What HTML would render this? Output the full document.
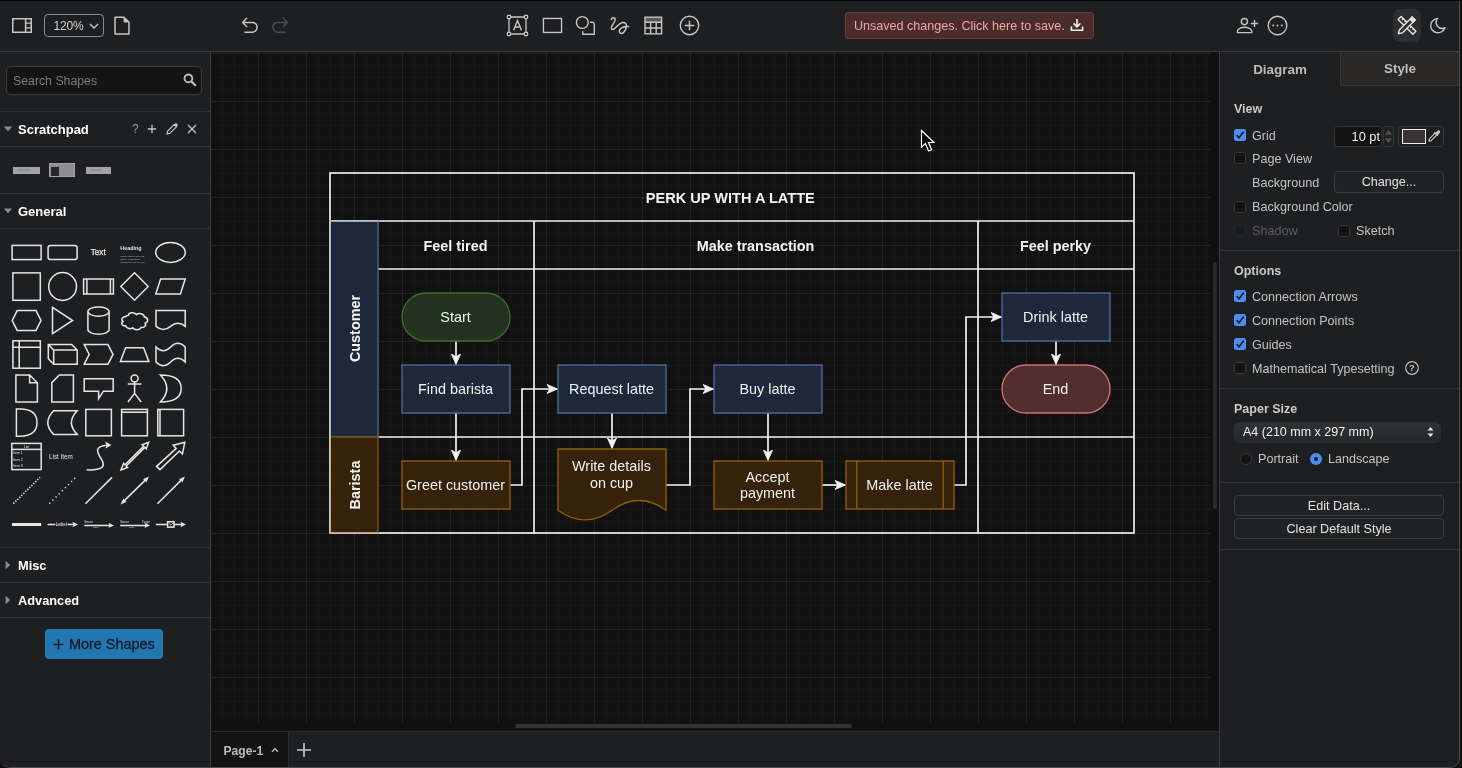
<!DOCTYPE html>
<html lang="en">
<head>
<meta charset="utf-8">
<title>draw.io</title>
<style>
*{box-sizing:border-box;margin:0;padding:0}
html,body{width:1462px;height:768px;overflow:hidden;background:#101011}
body{position:relative;font-family:"Liberation Sans",sans-serif;font-size:12px;color:#c8c8c8}
.abs{position:absolute}
#win{will-change:transform;position:absolute;left:0;top:0;width:1460px;height:768px;background:#1e1f21;border-radius:0 0 10px 10px;overflow:hidden;border-right:1px solid #505052;border-bottom:1px solid #505052}
#topline{position:absolute;left:0;top:0;width:1462px;height:1px;background:#060606;z-index:50}
#toolbar{position:absolute;left:0;top:0;width:1459px;height:52px;background:#1e1f21;border-bottom:1px solid #3a3b3d}
#left{position:absolute;left:0;top:52px;width:211px;height:716px;background:#1e1f21;border-right:1px solid #3a3b3d}
#right{position:absolute;left:1219px;top:52px;width:240px;height:716px;background:#1e1f21;border-left:1px solid #3a3b3d}
#canvas{position:absolute;left:211px;top:52px;width:1008px;height:679px;background:#111112;overflow:hidden}
#tabs{position:absolute;left:211px;top:731px;width:1008px;height:37px;background:#1e1f21;border-top:1px solid #2a2b2d}
.sep{position:absolute;left:0;width:210px;height:1px;background:#323335}
.ttl{position:absolute;left:18px;color:#fff;font-size:13px;font-weight:bold;white-space:nowrap}
.lbl{position:absolute;white-space:nowrap;color:#c4c4c4;font-size:12px}
svg{display:block;overflow:visible}
svg text{font-family:"Liberation Sans",sans-serif}
</style>
</head>
<body>
<div id="topline"></div>
<div id="win">
<div id="toolbar">
<!-- sidebar toggle -->
<svg class="abs" style="left:11px;top:16px" width="22" height="19" viewBox="0 0 22 19"><g fill="none" stroke="#c6c6c6" stroke-width="1.5"><rect x="1.75" y="2.75" width="18.5" height="13.5"/><path d="M14.6,2.75V16.25"/><path d="M14.6,7.2H20.2M14.6,11.8H20.2" stroke-width="1.2"/></g></svg>
<!-- zoom -->
<div class="abs" style="left:44px;top:14px;width:60px;height:23px;border:1px solid #8c8c8e;border-radius:4px"></div>
<div class="abs" style="left:53.500px;top:18px;font-size:12px;color:#d0d0d0;line-height:16px;letter-spacing:-0.200px">120%</div>
<svg class="abs" style="left:88px;top:21px" width="12" height="10" viewBox="0 0 12 10"><path d="M2,3L6,7L10,3" fill="none" stroke="#c6c6c6" stroke-width="1.4"/></svg>
<!-- page -->
<svg class="abs" style="left:113px;top:15px" width="18" height="21" viewBox="0 0 18 21"><path d="M2,2.2H11L16,7.2V19H2Z" fill="none" stroke="#c6c6c6" stroke-width="1.5" stroke-linejoin="round"/><path d="M10.6,2.2V7.6H16Z" fill="#c6c6c6"/></svg>
<!-- undo / redo -->
<svg class="abs" style="left:240px;top:16px" width="20" height="19" viewBox="0 0 20 19"><path d="M6.6,2.2L2.6,6.4L6.6,10.6M2.8,6.4H12.2A4.9,4.9 0 0 1 12.2,16.2H5" fill="none" stroke="#c6c6c6" stroke-width="1.5" stroke-linecap="round" stroke-linejoin="round"/></svg>
<svg class="abs" style="left:270px;top:16px" width="20" height="19" viewBox="0 0 20 19"><path d="M13.4,2.2L17.4,6.4L13.4,10.6M17.2,6.4H7.8A4.9,4.9 0 0 0 7.8,16.2H15" fill="none" stroke="#4c4d4f" stroke-width="1.5" stroke-linecap="round" stroke-linejoin="round"/></svg>
<!-- text box -->
<svg class="abs" style="left:506px;top:14px" width="23" height="23" viewBox="0 0 23 23"><g fill="none" stroke="#c6c6c6" stroke-width="1.3"><path d="M3,4.6V18.4M20,4.6V18.4M4.6,3H18.4M4.6,20H18.4"/><rect x="1.4" y="1.4" width="3.2" height="3.2" rx="0.8"/><rect x="18.4" y="1.4" width="3.2" height="3.2" rx="0.8"/><rect x="1.4" y="18.4" width="3.2" height="3.2" rx="0.8"/><rect x="18.4" y="18.4" width="3.2" height="3.2" rx="0.8"/><path d="M7.6,16.2L11.5,6.6L15.4,16.2M9,13H14" stroke-width="1.4"/></g></svg>
<!-- rectangle -->
<svg class="abs" style="left:541px;top:16px" width="23" height="19" viewBox="0 0 23 19"><rect x="2.450" y="2.450" width="18.100" height="14" fill="none" stroke="#c9c9c9" stroke-width="1.350"/></svg>
<!-- shapes -->
<svg class="abs" style="left:574px;top:15px" width="23" height="22" viewBox="0 0 23 22"><g fill="none" stroke="#c6c6c6" stroke-width="1.4"><circle cx="8.300" cy="7.500" r="5.900"/><path d="M16,7.200H18.600Q20.300,7.200 20.300,9V19.200H8.800V16.200"/></g></svg>
<!-- freehand -->
<svg class="abs" style="left:608px;top:15px" width="23" height="22" viewBox="0 0 23 22"><path d="M3.2,4.6C3.800,2.800 5.600,2.200 6.800,3.400C8.400,5 5.400,8.600 4,10.800C2.600,13 3.400,14.800 5.200,14.400C7.600,13.800 10.200,8.600 14.400,7.600C17.200,7 18.800,9 18.400,11.600C18,14.600 16,18 13.600,18.400C11.400,18.600 10.800,16.400 11.800,14.600C13.200,12.200 17,11.600 20.600,11.600" fill="none" stroke="#c6c6c6" stroke-width="1.5" stroke-linecap="round"/></svg>
<!-- table -->
<svg class="abs" style="left:643px;top:15px" width="21" height="21" viewBox="0 0 21 21"><g fill="none" stroke="#c6c6c6" stroke-width="1.4"><rect x="2" y="2.2" width="16.6" height="16.6"/><path d="M2,7.2H18.6M2,13H18.6M7.6,7.2V18.8M13.2,7.2V18.8"/></g><rect x="2" y="2.2" width="16.6" height="5" fill="#c6c6c6" opacity="0.35"/></svg>
<!-- plus circle -->
<svg class="abs" style="left:678px;top:14px" width="23" height="23" viewBox="0 0 23 23"><g fill="none" stroke="#c6c6c6" stroke-width="1.4"><circle cx="11.5" cy="11.5" r="9.2"/><path d="M11.5,6.8V16.2M6.8,11.5H16.2"/></g></svg>
<!-- unsaved -->
<div class="abs" style="left:845px;top:12px;width:249px;height:27px;background:#4a2c2c;border:1px solid #713b39;border-radius:3px"></div>
<div class="abs" style="left:854px;top:18px;font-size:12.55px;line-height:17px;color:#efa7a5;white-space:nowrap">Unsaved changes. Click here to save.</div>
<svg class="abs" style="left:1069px;top:17px" width="16" height="16" viewBox="0 0 16 16"><path d="M8,2V9.6M4.6,6.4L8,9.8L11.4,6.4M2.4,9.6V13.2H13.6V9.6" fill="none" stroke="#f2f2f2" stroke-width="1.6"/></svg>
<!-- share -->
<svg class="abs" style="left:1235px;top:15px" width="25" height="21" viewBox="0 0 25 21"><g fill="none" stroke="#c6c6c6" stroke-width="1.4"><circle cx="9.400" cy="6.600" r="3.100"/><path d="M2.400,17.600V16.400C2.400,13.600 6.600,12.300 9.600,12.300C12.600,12.300 16.800,13.600 16.800,16.400V17.600Z" stroke-linejoin="round"/><path d="M19.500,4.900V12.100M15.900,8.500H23.100"/></g></svg>
<!-- ellipsis -->
<svg class="abs" style="left:1266px;top:14px" width="23" height="23" viewBox="0 0 23 23"><circle cx="11.5" cy="11.5" r="9.3" fill="none" stroke="#c6c6c6" stroke-width="1.4"/><circle cx="7.2" cy="11.5" r="1" fill="#c6c6c6"/><circle cx="11.5" cy="11.5" r="1" fill="#c6c6c6"/><circle cx="15.8" cy="11.5" r="1" fill="#c6c6c6"/></svg>
<!-- format toggle -->
<div class="abs" style="left:1393px;top:9px;width:28px;height:33px;background:#2d2e30;border-radius:7px"></div>
<svg class="abs" style="left:1396px;top:14px" width="22" height="22" viewBox="0 0 22 22"><g fill="none" stroke="#e4e4e4" stroke-width="1.400" stroke-linejoin="round"><path d="M5.100,2.400L19.900,17.200L16.900,20.200L2.100,5.400Z"/><path d="M7.300,4.600L5.900,6M9.700,7L8.700,8M15.300,12.600L13.900,14M17.700,15L16.700,16" stroke-width="1.100"/><path d="M16.100,3.100L19.100,6.100L6.300,18.900L2.400,19.800L3.300,15.900Z" fill="#2d2e30"/></g><path d="M16.100,3.100L19.100,6.100L17,8.200L14,5.200Z" fill="#e4e4e4" stroke="#e4e4e4" stroke-width="1.400" stroke-linejoin="round"/></svg>
<!-- moon -->
<svg class="abs" style="left:1428px;top:15px" width="20" height="21" viewBox="0 0 20 21"><path d="M9.600,3.400A7.200,7.200 0 1 0 16.800,12.700A6,6 0 0 1 9.600,3.400Z" fill="none" stroke="#c6c6c6" stroke-width="1.4" stroke-linejoin="round"/></svg>
</div>
<div id="left">
<div style="position:absolute;left:0;top:-52px;width:210px;height:768px">
<!-- search -->
<div class="abs" style="left:6px;top:66px;width:196px;height:29px;background:#141415;border:1px solid #3a3b3d;border-radius:5px"></div>
<div class="abs" style="left:13px;top:73px;font-size:12.300px;line-height:17px;color:#7b7b7d;white-space:nowrap">Search Shapes</div>
<svg class="abs" style="left:182px;top:72px" width="16" height="16" viewBox="0 0 16 16"><circle cx="6.4" cy="6.4" r="3.9" fill="none" stroke="#bdbdbd" stroke-width="1.9"/><path d="M9.4,9.4L13.2,13.2" stroke="#bdbdbd" stroke-width="2.2" stroke-linecap="round"/></svg>
<div class="sep" style="top:111px"></div>
<!-- scratchpad -->
<svg class="abs" style="left:3px;top:125px" width="10" height="8" viewBox="0 0 10 8"><path d="M0.8,1.6H9.2L5,6.2Z" fill="#8d8d8f"/></svg>
<div class="ttl" style="top:121px;line-height:17px">Scratchpad</div>
<div class="abs" style="left:132px;top:121px;font-size:12px;line-height:17px;color:#9a9a9c">?</div>
<svg class="abs" style="left:146px;top:123px" width="12" height="12" viewBox="0 0 12 12"><path d="M6,1.8V10.2M1.8,6H10.2" stroke="#c6c6c6" stroke-width="1.3" fill="none"/></svg>
<svg class="abs" style="left:165px;top:122px" width="14" height="14" viewBox="0 0 14 14"><path d="M2,12L2.6,9.2L9.4,2.4L11.6,4.6L4.8,11.4Z" fill="none" stroke="#c6c6c6" stroke-width="1.2" stroke-linejoin="round"/><path d="M9.4,2.4L10.4,1.4Q11,0.8 11.6,1.4L12.6,2.4Q13.2,3 12.6,3.6L11.6,4.6Z" fill="#c6c6c6"/></svg>
<svg class="abs" style="left:186px;top:123px" width="12" height="12" viewBox="0 0 12 12"><path d="M2,2L10,10M10,2L2,10" stroke="#c6c6c6" stroke-width="1.3" fill="none"/></svg>
<div class="sep" style="top:146px"></div>
<div class="abs" style="left:13px;top:167px;width:27px;height:7px;background:#a3a3a5"></div>
<div class="abs" style="left:17px;top:169px;width:14px;height:2px;background:#8b909a"></div>
<div class="abs" style="left:49px;top:163px;width:26px;height:14px;background:#8e8e90;border:1px solid #a3a3a5"></div>
<div class="abs" style="left:51px;top:167px;width:8px;height:9px;background:#26272a"></div>
<div class="abs" style="left:86px;top:167px;width:25px;height:7px;background:#a3a3a5"></div>
<div class="abs" style="left:91px;top:169px;width:10px;height:2px;background:#8b909a"></div>
<div class="sep" style="top:193px"></div>
<!-- general -->
<svg class="abs" style="left:3px;top:207px" width="10" height="8" viewBox="0 0 10 8"><path d="M0.8,1.6H9.2L5,6.2Z" fill="#8d8d8f"/></svg>
<div class="ttl" style="top:203px;line-height:17px">General</div>
<div class="sep" style="top:228px"></div>
<svg class="abs" style="left:0;top:232px" width="210" height="314" viewBox="0 232 210 314">
<g fill="none" stroke="#e6e6e6" stroke-width="1.5" stroke-linejoin="miter">
<!-- row 1 -->
<rect x="12.1" y="245.4" width="29" height="14.2"/>
<rect x="48.1" y="245.4" width="29" height="14.2" rx="2.4"/>
<ellipse cx="170.5" cy="252.4" rx="14.8" ry="10"/>
<!-- row 2 -->
<rect x="12.9" y="272.9" width="27.4" height="27.4"/>
<circle cx="62.6" cy="286.5" r="13.9"/>
<rect x="83.6" y="279" width="29.8" height="15"/>
<path d="M86.9,279V294M110.4,279V294"/>
<path d="M134.5,272.8L148.2,286.5L134.5,300.2L120.8,286.5Z"/>
<path d="M160.6,279H185.2L180.4,294H155.8Z"/>
<!-- row 3 -->
<path d="M17.2,310.6H36L41,320.5L36,330.4H17.2L12.2,320.5Z"/>
<path d="M52.5,307.4L72.6,320.5L52.5,333.6Z"/>
<path d="M87.9,311.6V329.6A10.6,4.6 0 0 0 109.1,329.6V311.6A10.6,4.6 0 0 0 87.9,311.6A10.6,4.6 0 0 0 109.1,311.6"/>
<path d="M126,316.4C122.4,316.4 120.6,319.8 123,321.4C120.4,323 122.6,326.6 125.6,325.8C126.6,328.8 131,329.4 132.6,327.8C134.6,330.6 139.6,330.4 141.2,327.4C144.6,328 146.6,325.2 145.2,323.2C148.8,322 148.2,317.4 144.4,317C144,313.6 138.4,312.6 136.4,314.6C134,311.8 128.8,312.4 128.4,315.2C127.4,315.2 126.4,315.6 126,316.4Z"/>
<path d="M156,310.6H185.2V326.4Q177.9,320.2 170.6,326.4Q163.3,332.6 156,326.4Z"/>
<!-- row 4 -->
<rect x="12.9" y="340.8" width="27.4" height="27.4"/>
<path d="M19.2,340.8V368.2M12.9,347.2H40.3"/>
<path d="M48.3,344.6H71.8L77.2,350V364.2H53.7L48.3,358.8ZM48.3,344.6L53.7,350H77.2M53.7,350V364.2"/>
<path d="M84.2,344.6H108L113,354.4L108,364.2H84.2L89.2,354.4Z"/>
<path d="M120.4,361.6L125.6,347.8H143.6L148.8,361.6Z"/>
<path d="M156,347Q163.3,354.4 170.6,347Q177.9,339.6 185.2,347V362Q177.9,354.6 170.6,362Q163.3,369.4 156,362Z"/>
<!-- row 5 -->
<path d="M15.9,375H29.6L37.4,382.8V402H15.9ZM29.6,375V382.8H37.4"/>
<path d="M59.4,375H73.4V402H51.8V382.6Z"/>
<path d="M84.2,378.8H113.2V391.2H103.4L98.6,398.6V391.2H84.2Z"/>
<circle cx="134.6" cy="378.6" r="3.5"/>
<path d="M134.6,382.1V393.4M127.8,384H141.4M134.6,393.4L128,402M134.6,393.4L141.2,402"/>
<path d="M160.4,375Q181.2,375 181.2,388.5Q181.2,402 160.4,402Q173.2,388.5 160.4,375Z"/>
<!-- row 6 -->
<path d="M16.4,409H20Q37,409 37,422.6Q37,436.2 20,436.2H16.4Z"/>
<path d="M53.6,410.8H77.2Q65.6,422.6 77.2,434.4H53.6Q42,422.6 53.6,410.8Z"/>
<rect x="85.8" y="409.4" width="25.6" height="26.4"/>
<rect x="121.6" y="409.4" width="25.8" height="26.4"/>
<path d="M121.6,412.2H147.4"/>
<rect x="157.8" y="409.4" width="25.8" height="26.4"/>
<path d="M160,409.4V435.8"/>
<!-- row 7 -->
<rect x="11.8" y="443.4" width="29.4" height="26.2"/>
<path d="M11.8,449.4H41.2"/>
<path d="M86.6,469.8C102,470.6 106,466.6 101.6,459.6C96.6,451.6 94,446.4 107.4,445.3"/>
<path d="M121,470L123.600,463.4L125,464.8L143.600,446.2L142.200,444.800L148.600,442.4L146.200,448.800L144.800,447.400L126.200,466L127.600,467.400Z"/>
<path d="M156.600,466.400L176.200,448.400L173.200,445.200L184.800,442.200L182.400,454L179.400,451L160,469.600Z"/>
<!-- row 8 -->
<path d="M13.4,503.600L40,477.400" stroke-dasharray="1.4 1.4"/>
<path d="M49.400,503.600L75.600,477.400" stroke-dasharray="1.2 3.2"/>
<path d="M85.400,503.800L112,477.400"/>
<path d="M123.600,501.400L146,479.400"/>
<path d="M157.400,503.800L182,479.400"/>
<!-- row 9 -->
<path d="M12,524.500H41.200" stroke-width="3"/>
<path d="M47.600,524.500H74"/>
<path d="M84.200,525.400H110"/>
<path d="M120.200,525.400H146"/>
<path d="M155.800,524.500H182"/>
<rect x="167.600" y="521.700" width="6.400" height="5.400" fill="#1e1f21"/>
<path d="M168.400,522.800L170.800,525L173.200,522.800" stroke-width="0.8"/>
</g>
<g fill="#e6e6e6" stroke="none">
<path d="M111.6,445L105,441.6L106.6,445.2L105.4,448.6Z"/>
<path d="M120.600,504.400L126.800,501.800L124.600,500.800L123.400,498.200Z"/>
<path d="M149,476.600L142.800,479.200L145,480.200L146.200,482.800Z"/>
<path d="M185,476.600L178.800,479.200L181,480.200L182.200,482.800Z"/>
<path d="M78,524.500L72.400,521.800L73.600,524.500L72.400,527.200Z"/>
<path d="M114,525.400L108.400,522.700L109.600,525.400L108.400,528.100Z"/>
<path d="M150,525.400L144.400,522.700L145.600,525.400L144.400,528.100Z"/>
<path d="M186,524.500L180.400,521.800L181.600,524.500L180.400,527.200Z"/>
</g>
<g fill="#e2e2e2" stroke="none" font-family="'Liberation Sans',sans-serif">
<text x="98.200" y="255.100" font-size="8.200" text-anchor="middle" stroke="#e6e6e6" stroke-width="0.250">Text</text>
<text x="120.300" y="250.400" font-size="5.400" font-weight="bold">Heading</text>
<text x="120.300" y="256.600" font-size="2.500" fill="#b8b8b8">Lorem ipsum dolor sit</text>
<text x="120.300" y="259.600" font-size="2.500" fill="#b8b8b8">amet, consectetur</text>
<text x="120.300" y="262.600" font-size="2.500" fill="#b8b8b8">adipisicing elit, sed do</text>
<text x="26.500" y="447.900" font-size="3.400" text-anchor="middle">List</text>
<text x="13.200" y="454.300" font-size="3.400">Item 1</text>
<text x="13.200" y="460.500" font-size="3.400">Item 2</text>
<text x="13.200" y="466.700" font-size="3.400">Item 3</text>
<text x="49" y="458.800" font-size="6.3">List Item</text>
<text x="61.300" y="526.200" font-size="4.600" text-anchor="middle" stroke="#1e1f21" stroke-width="1.6" paint-order="stroke">Label</text>
<text x="84.200" y="523.400" font-size="2.800">Source</text>
<text x="120.200" y="523.400" font-size="2.800">Source</text>
<text x="142" y="523.400" font-size="2.800">Target</text>
<text x="93" y="527.600" font-size="2.200" stroke="#1e1f21" stroke-width="0.6" paint-order="stroke">Label</text>
<text x="129" y="527.600" font-size="2.200" stroke="#1e1f21" stroke-width="0.6" paint-order="stroke">Label</text>
</g>
</svg>
<div class="sep" style="top:547px"></div>
<svg class="abs" style="left:4px;top:560px" width="8" height="10" viewBox="0 0 8 10"><path d="M1.6,0.8V9.2L6.2,5Z" fill="#8d8d8f"/></svg>
<div class="ttl" style="top:557px;line-height:17px;font-size:12.8px">Misc</div>
<div class="sep" style="top:582px"></div>
<svg class="abs" style="left:4px;top:595px" width="8" height="10" viewBox="0 0 8 10"><path d="M1.6,0.8V9.2L6.2,5Z" fill="#8d8d8f"/></svg>
<div class="ttl" style="top:592px;line-height:17px;font-size:12.8px">Advanced</div>
<div class="sep" style="top:617px"></div>
<div class="abs" style="left:45px;top:629px;width:118px;height:30px;background:#2277b1;border-radius:4px"></div>
<svg class="abs" style="left:52px;top:638px" width="13" height="13" viewBox="0 0 13 13"><path d="M6.5,1.6V11.4M1.6,6.5H11.4" stroke="#0f1a24" stroke-width="1.7" fill="none"/></svg>
<div class="abs" style="left:69px;top:635px;font-size:14.4px;line-height:19px;color:#0f1a24;white-space:nowrap;-webkit-text-stroke:0.300px #0f1a24" id="more">More Shapes</div>
</div>
</div>
<div id="canvas">
<svg width="1008" height="679" viewBox="211 52 1008 679">
<defs>
<pattern id="grid" x="246" y="89" width="48" height="48" patternUnits="userSpaceOnUse">
<g shape-rendering="crispEdges">
<rect x="0" y="0" width="1" height="48" fill="#171719"/>
<rect x="24" y="0" width="1" height="48" fill="#171719"/>
<rect x="36" y="0" width="1" height="48" fill="#171719"/>
<rect x="0" y="0" width="48" height="1" fill="#171719"/>
<rect x="0" y="24" width="48" height="1" fill="#171719"/>
<rect x="0" y="36" width="48" height="1" fill="#171719"/>
<rect x="12" y="0" width="1" height="48" fill="#242426"/>
<rect x="0" y="12" width="48" height="1" fill="#242426"/>
</g>
</pattern>
<marker id="ah" viewBox="0 0 12 10" refX="11" refY="5" markerWidth="12" markerHeight="10" markerUnits="userSpaceOnUse" orient="auto">
<path d="M0.6,0.4 L11,5 L0.6,9.6 L3.2,5 Z" fill="#f2f2f2" stroke="#f2f2f2" stroke-width="0.8" stroke-linejoin="miter"/>
</marker>
</defs>
<rect x="211" y="52" width="999" height="670" fill="url(#grid)"/>
<!-- scrollbars -->
<rect x="1213" y="262" width="4" height="247" rx="2" fill="#29292b"/>
<rect x="515" y="724" width="337" height="4" rx="2" fill="#333335"/>
<!-- pool -->
<g transform="translate(-0.5,-0.5)">
<g fill="none" stroke="#f0f0f0" stroke-width="1.7">
<rect x="330.5" y="173.5" width="804" height="360"/>
<path d="M330.5,221.5H1134.5M378.5,269.5H1134.5M378.5,437.5H1134.5M534.5,221.5V533.5M978.5,221.5V533.5"/>
</g>
<rect x="330.5" y="221.5" width="48" height="216" fill="#1d293b" stroke="#4f698f" stroke-width="1.3"/>
<rect x="330.5" y="437.5" width="48" height="96" fill="#36210a" stroke="#80560a" stroke-width="1.3"/>
<g fill="none" stroke="#f0f0f0" stroke-width="1.7" opacity="0.72">
<path d="M330.5,221.5V533.5M330.5,221.5H378.5M330.5,533.5H378.5"/>
</g>
</g>
<!-- header text -->
<g fill="#f4f4f4" font-weight="bold" font-size="14.4" text-anchor="middle">
<text x="730.3" y="203" font-size="14.55">PERK UP WITH A LATTE</text>
<text x="455.5" y="251">Feel tired</text>
<text x="755.5" y="251">Make transaction</text>
<text x="1055.5" y="251">Feel perky</text>
<text transform="translate(359.5,328.5) rotate(-90)">Customer</text>
<text transform="translate(359.5,485) rotate(-90)">Barista</text>
</g>
<g transform="translate(-0.5,-0.5)">
<!-- edges -->
<g fill="none" stroke="#f2f2f2" stroke-width="1.7" marker-end="url(#ah)">
<path d="M456.5,341.5V365"/>
<path d="M456.5,413.5V461"/>
<path d="M510.5,485.5H522.5V389.5H558"/>
<path d="M612.5,413.5V449"/>
<path d="M666.5,485.5H690.5V389.5H714"/>
<path d="M768.5,413.5V461"/>
<path d="M822.5,485.5H846"/>
<path d="M954.5,485.5H966.5V317.5H1002"/>
<path d="M1056.5,341.5V365"/>
</g>
<!-- shapes -->
<g stroke-width="1.35">
<rect x="402.5" y="293.5" width="108" height="48" rx="24" fill="#21321f" stroke="#41692b"/>
<rect x="402.5" y="365.5" width="108" height="48" fill="#1d293b" stroke="#506b93"/>
<rect x="402.5" y="461.5" width="108" height="48" fill="#36210a" stroke="#8f5f02"/>
<rect x="558.5" y="365.5" width="108" height="48" fill="#1d293b" stroke="#506b93"/>
<path d="M558.5,449.5H666.5V510.7Q639.5,491.3 612.5,510.7Q585.5,530.1 558.5,510.7Z" fill="#36210a" stroke="#8f5f02"/>
<rect x="714.5" y="365.5" width="108" height="48" fill="#1d293b" stroke="#506b93"/>
<rect x="714.5" y="461.5" width="108" height="48" fill="#36210a" stroke="#8f5f02"/>
<rect x="846.5" y="461.5" width="108" height="48" fill="#36210a" stroke="#8f5f02"/>
<path d="M857.3,461.5V509.5M943.7,461.5V509.5" fill="none" stroke="#8f5f02"/>
<rect x="1002.5" y="293.5" width="108" height="48" fill="#1d293b" stroke="#506b93"/>
<rect x="1002.5" y="365.5" width="108" height="48" rx="24" fill="#512d2b" stroke="#c47572"/>
</g>
</g>
<g fill="#f2f2f2" font-size="14.4" text-anchor="middle">
<text x="455.5" y="321.5">Start</text>
<text x="455.5" y="393.5">Find barista</text>
<text x="455.5" y="489.5">Greet customer</text>
<text x="611.5" y="393.5">Request latte</text>
<text x="611.5" y="470.8">Write details</text>
<text x="611.5" y="488.2">on cup</text>
<text x="767.5" y="393.5">Buy latte</text>
<text x="767.5" y="481.800">Accept</text>
<text x="767.5" y="498.200">payment</text>
<text x="899.5" y="489.5">Make latte</text>
<text x="1055.5" y="321.5">Drink latte</text>
<text x="1055.5" y="393.5">End</text>
</g>
<!-- cursor -->
<g transform="translate(921,130)">
<path d="M0.5,0.5V17.2L4.4,13.6L7.6,21L10.6,19.7L7.5,12.5H12.9Z" fill="#050505" stroke="#fff" stroke-width="1.2" stroke-linejoin="miter"/>
</g>
</svg>
</div>
<div id="tabs">
<div class="abs" style="left:0;top:0;width:78px;height:36px;background:#131314;border-right:1px solid #2c2d2f"></div>
<div class="abs" style="left:12.500px;top:11px;font-size:12.100px;font-weight:bold;line-height:16px;color:#bdbdbd;white-space:nowrap">Page-1</div>
<svg class="abs" style="left:59px;top:14px" width="10" height="8" viewBox="0 0 10 8"><path d="M2,5.8L5,2.8L8,5.800" fill="none" stroke="#bdbdbd" stroke-width="1.400"/></svg>
<svg class="abs" style="left:85px;top:10px" width="16" height="16" viewBox="0 0 16 16"><path d="M8,1V15M1,8H15" fill="none" stroke="#c4c4c4" stroke-width="1.700"/></svg>
</div>
<div id="right">
<div style="position:absolute;left:-1220px;top:-52px;width:1459px;height:768px">
<style>
.cb{position:absolute;width:12px;height:12px;border-radius:2.500px;background:#131314;border:1px solid #37383a}
.cbon{position:absolute;width:12px;height:12px;border-radius:2.500px;background:#4b8ef0}
.rl{position:absolute;white-space:nowrap;color:#c2c2c2;font-size:12.600px;line-height:16px}
.rh{position:absolute;left:1234px;white-space:nowrap;color:#c9c9c9;font-size:12.500px;font-weight:bold;line-height:16px}
.btn{position:absolute;border:1px solid #3a3b3d;border-radius:4px;background:#212224;color:#e2e2e2;font-size:12.600px;line-height:20.500px;text-align:center;white-space:nowrap}
.rsep{position:absolute;left:1220px;width:239px;height:1px;background:#323335}
</style>
<!-- tabs -->
<div class="abs" style="left:1340px;top:52px;width:119px;height:34px;background:#292826;border-left:1px solid #363636;border-bottom:1px solid #363636"></div>
<div class="abs" style="left:1220px;top:61px;width:120px;text-align:center;font-size:13.400px;font-weight:bold;line-height:18px;color:#bcbcbc">Diagram</div>
<div class="abs" style="left:1341px;top:60px;width:118px;text-align:center;font-size:13.400px;font-weight:bold;line-height:18px;color:#bcbcbc">Style</div>
<!-- view -->
<div class="rh" style="top:100.500px">View</div>
<div class="cbon" style="left:1234px;top:129px"></div>
<svg class="abs" style="left:1234px;top:129px" width="12" height="12" viewBox="0 0 12 12"><path d="M2.600,6.200L5,8.800L9.600,2.800" fill="none" stroke="#101826" stroke-width="1.700"/></svg>
<div class="rl" style="left:1252px;top:127.500px">Grid</div>
<div class="abs" style="left:1334px;top:126px;width:48px;height:21px;background:#121213;border:1px solid #37383a;border-radius:4px"></div>
<div class="abs" style="left:1334px;top:128.500px;width:46px;text-align:right;font-size:12.800px;line-height:16px;color:#f0f0f0;white-space:nowrap">10 pt</div>
<div class="abs" style="left:1383px;top:126px;width:11px;height:21px;border:1px solid #37383a;border-radius:3px"></div>
<svg class="abs" style="left:1383px;top:126px" width="11" height="21" viewBox="0 0 11 21"><path d="M2.600,8.200L5.500,4.600L8.400,8.200Z M2.600,12.800L5.500,16.400L8.400,12.800Z" fill="#4a4b4d" stroke="#6a6b6d" stroke-width="0.600"/></svg>
<div class="abs" style="left:1398px;top:126px;width:46px;height:21px;border:1px solid #37383a;border-radius:4px"></div>
<div class="abs" style="left:1401.500px;top:128.500px;width:24px;height:15px;background:#3a3434;border:1.500px solid #ededed"></div>
<svg class="abs" style="left:1427px;top:129px" width="14" height="14" viewBox="0 0 14 14"><path d="M1.800,12.200L2.400,9.800L8,4.200L9.800,6L4.200,11.600Z" fill="none" stroke="#c6c6c6" stroke-width="1.100" stroke-linejoin="round"/><path d="M7.400,3.400L10.600,6.600M9,4L10.600,2.400Q11.600,1.400 12.400,2.200Q13,3 12,4L10.400,5.600Z" fill="#c6c6c6" stroke="#c6c6c6" stroke-width="1.100" stroke-linecap="round"/></svg>
<div class="cb" style="left:1234px;top:152px"></div>
<div class="rl" style="left:1252px;top:150.500px">Page View</div>
<div class="rl" style="left:1252px;top:174.500px">Background</div>
<div class="btn" style="left:1334px;top:171px;width:110px;height:22px">Change...</div>
<div class="cb" style="left:1234px;top:201px"></div>
<div class="rl" style="left:1252px;top:199px">Background Color</div>
<div class="cb" style="left:1234px;top:225px;background:#1c1d1f;border-color:#28292b"></div>
<div class="rl" style="left:1252px;top:222.500px;color:#5d5d5f">Shadow</div>
<div class="cb" style="left:1338px;top:225px"></div>
<div class="rl" style="left:1356px;top:222.500px">Sketch</div>
<div class="rsep" style="top:250px"></div>
<!-- options -->
<div class="rh" style="top:263px">Options</div>
<div class="cbon" style="left:1234px;top:290px"></div>
<svg class="abs" style="left:1234px;top:290px" width="12" height="12" viewBox="0 0 12 12"><path d="M2.600,6.200L5,8.800L9.600,2.800" fill="none" stroke="#101826" stroke-width="1.700"/></svg>
<div class="rl" style="left:1252px;top:288.500px">Connection Arrows</div>
<div class="cbon" style="left:1234px;top:314px"></div>
<svg class="abs" style="left:1234px;top:314px" width="12" height="12" viewBox="0 0 12 12"><path d="M2.600,6.200L5,8.800L9.600,2.800" fill="none" stroke="#101826" stroke-width="1.700"/></svg>
<div class="rl" style="left:1252px;top:312.500px">Connection Points</div>
<div class="cbon" style="left:1234px;top:338px"></div>
<svg class="abs" style="left:1234px;top:338px" width="12" height="12" viewBox="0 0 12 12"><path d="M2.600,6.200L5,8.800L9.600,2.800" fill="none" stroke="#101826" stroke-width="1.700"/></svg>
<div class="rl" style="left:1252px;top:336.500px">Guides</div>
<div class="cb" style="left:1234px;top:362px"></div>
<div class="rl" style="left:1252px;top:360.500px">Mathematical Typesetting</div>
<svg class="abs" style="left:1404px;top:360px" width="16" height="16" viewBox="0 0 16 16"><circle cx="8" cy="8" r="6.300" fill="none" stroke="#bdbdbd" stroke-width="1.200"/><text x="8" y="11.400" font-size="9.500" font-weight="bold" text-anchor="middle" fill="#bdbdbd">?</text></svg>
<div class="rsep" style="top:388px"></div>
<!-- paper -->
<div class="rh" style="top:401px">Paper Size</div>
<div class="abs" style="left:1234.500px;top:423px;width:205px;height:18.500px;border-radius:4px;background:linear-gradient(#303133,#262729);box-shadow:0 0 0 0.500px #3a3b3d"></div>
<div class="abs" style="left:1243px;top:424px;font-size:12.500px;line-height:16px;color:#f0f0f0;white-space:nowrap">A4 (210 mm x 297 mm)</div>
<svg class="abs" style="left:1426px;top:424px" width="9" height="16" viewBox="0 0 9 16"><path d="M1.600,6.600L4.500,3L7.400,6.600ZM1.600,9.400L4.500,13L7.400,9.400Z" fill="#f0f0f0"/></svg>
<div class="abs" style="left:1240px;top:453px;width:12px;height:12px;border-radius:6px;background:#131314;border:1px solid #37383a"></div>
<div class="rl" style="left:1258px;top:451px">Portrait</div>
<div class="abs" style="left:1310px;top:453px;width:12px;height:12px;border-radius:6px;background:#4b8ef0"></div>
<div class="abs" style="left:1314px;top:457px;width:4px;height:4px;border-radius:2px;background:#101826"></div>
<div class="rl" style="left:1328px;top:451px">Landscape</div>
<div class="rsep" style="top:482px"></div>
<div class="btn" style="left:1234px;top:495px;width:210px;height:21px">Edit Data...</div>
<div class="btn" style="left:1234px;top:518px;width:210px;height:21px">Clear Default Style</div>
<div class="rsep" style="top:549px"></div>
</div>
</div>
</div>
</body>
</html>
